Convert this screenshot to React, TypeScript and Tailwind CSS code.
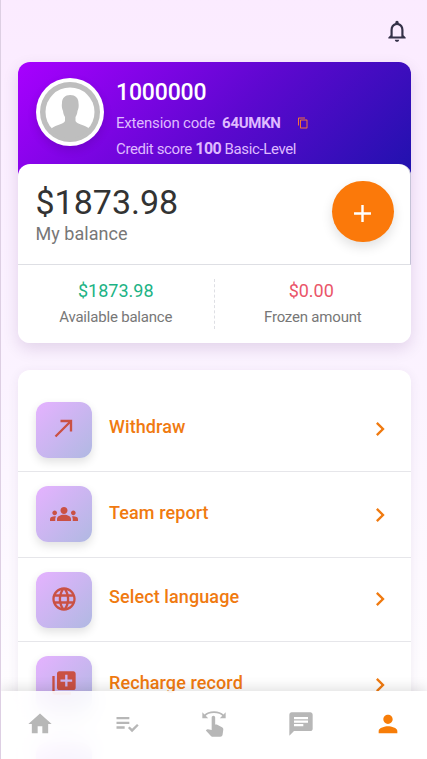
import React from "react";
import {
  MdNotificationsNone, MdContentCopy, MdAdd, MdCallMade, MdGroups, MdLanguage, MdLibraryAdd,
  MdChevronRight, MdHome, MdPlaylistAddCheck, MdSwipe, MdChat, MdPerson,
} from "react-icons/md";

const items = [
  { label: "Withdraw", icon: MdCallMade, row: "h-[101px] pt-[31px]", text: "mt-[12px]", glyph: "-mt-[4px]" },
  { label: "Team report", icon: MdGroups, row: "h-[86px] pt-[14px]", text: "mt-[14px]", glyph: "" },
  { label: "Select language", icon: MdLanguage, row: "h-[84px] pt-[14px]", text: "mt-[12px]", glyph: "-mt-[3px]" },
  { label: "Recharge record", icon: MdLibraryAdd, row: "h-[86px] pt-[14px]", text: "mt-[14px]", glyph: "-mt-[2px]" },
  { label: "", icon: MdCallMade, row: "h-[86px] pt-[14px]", text: "mt-[14px]", glyph: "" },
];

export default function App() {
  return (
    <div className="relative h-[759px] w-[427px] overflow-hidden border-l border-[#ddcfe3] bg-linear-to-b from-[#fbebff] via-[#fbf3ff] via-50% to-white font-[Roboto,sans-serif]">
      <header className="flex h-[62px] items-center justify-end pr-[17px]">
        <MdNotificationsNone className="size-[26px] text-[#343148]" />
      </header>

      <section className="ml-[17px] w-[393px] rounded-[12px] shadow-[0_6px_16px_rgba(60,0,90,0.13)]">
        <div className="-mb-[104px] flex h-[206px] rounded-t-[12px] bg-[linear-gradient(135deg,#a800ff_0%,#5d08cf_45%,#1f12ad_85%,#1517a3_100%)] pl-[18px] pt-[16px]">
          <div className="size-[68px] shrink-0 rounded-full bg-white p-1 shadow-[0_4px_10px_rgba(0,0,0,0.12)]">
            <svg viewBox="0 0 60 60" className="size-full">
              <circle cx="30" cy="30" r="30" fill="#bebebe" />
              <circle cx="30" cy="30" r="24.5" fill="white" />
              <path d="M22 21C22 16 25 13 30.2 13s8.300 3 8.300 8c.5 3 0 6-1 8-.4 3-1 4-2 6v4c1 3 9 4 13 7 1 2-8 10-18.500 10S11 48 12 46c4-3 12-4 13-7v-4c-1-2-1.600-3-2-6-1-2-1.500-5-1-8z" fill="#bebebe" />
            </svg>
          </div>
          <div className="ml-[12px] text-[#dfbaff]">
            <div className="mt-[1px] text-[23px] font-medium leading-[28px] tracking-[-0.15px] text-white">1000000</div>
            <div className="mt-[3px] flex h-[26px] items-center text-[15px] tracking-[-0.2px]">
              <span>Extension code</span>
              <strong className="ml-[7px] font-bold tracking-[-0.3px]">64UMKN</strong>
              <MdContentCopy className="ml-[16.500px] size-[12px] text-[#f47536]" />
            </div>
            <div className="h-[26px] text-[15px] leading-[26px] tracking-[-0.38px]">
              Credit score <strong className="text-[16px] font-bold tracking-[-0.5px]">100</strong> Basic-Level
            </div>
          </div>
        </div>

        <div className="relative h-[179px] rounded-[12px] bg-white">
          <div className="flex h-[101px] justify-between border-b border-r border-b-[#dedfe4] border-r-[#c4c2d6] rounded-tr-[12px] pl-[17.500px] pr-[16px]">
            <div className="pt-[18px]">
              <div className="text-[34px] leading-[40px] text-[#333]">$1873.98</div>
              <div className="mt-[1px] text-[18px] leading-[22px] tracking-[0.05px] text-[#777]">My balance</div>
            </div>
            <button className="mt-[17px] flex h-[61px] w-[62px] items-center justify-center rounded-full bg-[#fb790a] shadow-[0_5px_12px_rgba(0,0,0,0.12)]">
              <MdAdd className="-ml-[1px] mt-[4px] size-[29px] text-white" />
            </button>
          </div>
          <div className="flex pt-[14px] text-center">
            <div className="h-[50px] w-1/2 border-r border-dashed border-[#dedfe4]">
              <div className="text-[18px] leading-[24px] text-[#1db385]">$1873.98</div>
              <div className="mt-[3px] text-[15px] leading-[22px] tracking-[-0.2px] text-[#777]">Available balance</div>
            </div>
            <div className="w-1/2">
              <div className="pr-[3px] text-[18px] leading-[24px] text-[#ea5569]">$0.00</div>
              <div className="mt-[3px] text-[15px] leading-[22px] tracking-[-0.2px] text-[#777]">Frozen amount</div>
            </div>
          </div>
        </div>
      </section>

      <section className="ml-[17px] mt-[27px] w-[393px] rounded-[12px] bg-white pt-[1px] shadow-[0_2px_12px_rgba(60,0,90,0.07)]">
        {items.map(({ label, icon: Icon, row, text, glyph }, i) => (
          <div key={i} className={`flex border-b border-[#e6e6ea] pl-[18px] pr-[17px] ${row}`}>
            <div className="flex size-[56px] shrink-0 items-center justify-center rounded-[12px] bg-[linear-gradient(135deg,#e5b2ff,#b0b9e2)] text-[#ca5144] shadow-[0_4px_10px_rgba(0,0,0,0.12)]">
              <Icon className={`-ml-[1px] size-[28px] ${glyph}`} />
            </div>
            <div className={`ml-[17px] flex h-[28px] grow justify-between text-[#f07a10] ${text}`}>
              <span className="text-[18px] font-medium leading-[26px] tracking-[0.1px]">{label}</span>
              <MdChevronRight className="mt-[1px] size-[28px]" />
            </div>
          </div>
        ))}
      </section>

      <nav className="absolute inset-x-0 bottom-0 flex h-[68px] bg-white/85 text-[#b7b7b7] shadow-[0_-3px_12px_rgba(0,0,0,0.12)] backdrop-blur-[12px]">
        {[MdHome, MdPlaylistAddCheck, MdSwipe, MdChat, MdPerson].map((Icon, i) => (
          <button key={i} className={`flex h-[66px] w-[86.800px] shrink-0 items-center justify-center ${i === 4 ? "text-[#f77d08]" : ""} ${i === 0 ? "-ml-[4px]" : ""}`}>
            <Icon className="size-[28px]" />
          </button>
        ))}
      </nav>
    </div>
  );
}
